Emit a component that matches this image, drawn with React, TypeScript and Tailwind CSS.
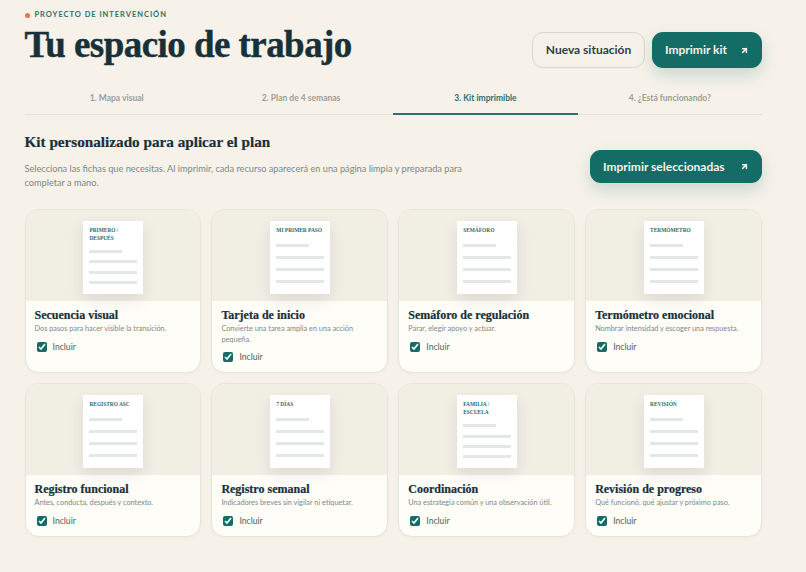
import { ArrowUpRight } from 'lucide-react';

const serif = { fontFamily: '"Liberation Serif", serif' };

const tabs = ['1. Mapa visual', '2. Plan de 4 semanas', '3. Kit imprimible', '4. ¿Está funcionando?'];

const cards = [
  { doc: ['PRIMERO /', 'DESPUÉS'], title: 'Secuencia visual', text: 'Dos pasos para hacer visible la transición.' },
  { doc: ['MI PRIMER PASO'], title: 'Tarjeta de inicio', text: 'Convierte una tarea amplia en una acción pequeña.' },
  { doc: ['SEMÁFORO'], title: 'Semáforo de regulación', text: 'Parar, elegir apoyo y actuar.' },
  { doc: ['TERMÓMETRO'], title: 'Termómetro emocional', text: 'Nombrar intensidad y escoger una respuesta.' },
  { doc: ['REGISTRO ASC'], title: 'Registro funcional', text: 'Antes, conducta, después y contexto.' },
  { doc: ['7 DÍAS'], title: 'Registro semanal', text: 'Indicadores breves sin vigilar ni etiquetar.' },
  { doc: ['FAMILIA /', 'ESCUELA'], title: 'Coordinación', text: 'Una estrategia común y una observación útil.' },
  { doc: ['REVISIÓN'], title: 'Revisión de progreso', text: 'Qué funcionó, qué ajustar y próximo paso.' },
];

function PrintButton({ label, className }: { label: string; className: string }) {
  return (
    <button className={`flex items-center justify-between rounded-[11px] bg-[#146c66] text-[12px] font-bold text-[#f7f3ea] shadow-[0_7px_16px_rgba(20,108,102,0.2)] ${className}`}>
      <span>{label}</span>
      <ArrowUpRight className="h-[9px] w-[9px]" strokeWidth={4} />
    </button>
  );
}

function KitCard({ doc, title, text }: { doc: string[]; title: string; text: string }) {
  const twoLines = doc.length > 1;
  return (
    <article className="overflow-hidden rounded-[14px] border border-[#e8e5dc] bg-[#fffdf8] shadow-[0_1px_3px_rgba(30,50,60,0.04)]">
      {/* Sheet preview */}
      <div className="flex h-[91px] justify-center bg-[#f1eee4] pt-[11px]">
        <div className="flex h-[73px] w-[60px] flex-col bg-white pl-[6.5px] pr-[5.5px] pt-[5px] shadow-[0_6px_14px_rgba(30,50,60,0.1)]">
          <div className="text-[5.4px] font-bold leading-[8px] text-[#2e6d6a]" style={serif}>
            {doc.map((line) => (
              <div key={line}>{line}</div>
            ))}
          </div>
          <div className={`flex flex-col ${twoLines ? 'mt-[8px] gap-[7.3px]' : 'mt-[10px] gap-[9px]'}`}>
            <div className="h-[3px] w-[33px] bg-[#e2e8e6]" />
            <div className="h-[3px] w-full bg-[#e2e8e6]" />
            <div className="h-[3px] w-full bg-[#e2e8e6]" />
            <div className="h-[3px] w-full bg-[#e2e8e6]" />
          </div>
        </div>
      </div>
      <div className="px-[9px] pb-[8.5px] pt-[7px]">
        <h3 className="text-[12px] font-bold leading-[15px] text-[#17303a] [-webkit-text-stroke:0.2px_#17303a]" style={serif}>{title}</h3>
        <p className="mt-[1px] text-[7.3px] leading-[10.5px] text-[#7d8887]">{text}</p>
        <label className="mt-[6px] flex items-center gap-[6px] pl-[2px] text-[8.6px] font-medium text-[#5f6b6b]">
          <input type="checkbox" defaultChecked className="m-0 h-[10px] w-[10px] accent-[#146c66]" />
          Incluir
        </label>
      </div>
    </article>
  );
}

export default function App() {
  return (
    <div className="min-h-[572px] bg-[#f6f2e9] pl-[24.5px] pr-[44px] pt-[10px] font-['Lato',sans-serif]">
      {/* Header */}
      <header className="flex items-start justify-between">
        <div>
          <div className="flex items-center gap-[5px] text-[7.5px] font-bold leading-[10px] tracking-[0.13em] text-[#2f6f69]">
            <span className="h-[5px] w-[5px] rounded-full bg-[#ee7059]" />
            PROYECTO DE INTERVENCIÓN
          </div>
          <h1 className="mt-[2px] text-[37px] font-bold leading-[46px] tracking-[-0.55px] text-[#17303a] [-webkit-text-stroke:0.4px_#17303a]" style={serif}>Tu espacio de trabajo</h1>
        </div>
        <div className="mt-[22px] flex gap-[7px]">
          <button className="h-[36px] w-[113px] rounded-[11px] border border-[#d9d8ce] text-[12px] font-bold text-[#2b3f46]">Nueva situación</button>
          <PrintButton label="Imprimir kit" className="h-[36px] w-[110px] px-[13px]" />
        </div>
      </header>

      {/* Tabs */}
      <nav className="mt-[12px] grid grid-cols-4 border-b border-[#e5e3da]">
        {tabs.map((tab, i) => (
          <div
            key={tab}
            className={`-mb-px flex h-[35px] items-center justify-center border-b-2 pt-[3px] text-[8.5px] font-bold ${
              i === 2 ? 'border-[#2f6f6d] text-[#2f6f69]' : 'border-transparent text-[#9a9d98]'
            }`}
          >
            {tab}
          </div>
        ))}
      </nav>

      {/* Section intro */}
      <section className="mt-[18px] flex items-start justify-between">
        <div className="w-[460px]">
          <h2 className="text-[15.2px] font-bold leading-[18px] text-[#17303a] [-webkit-text-stroke:0.2px_#17303a]" style={serif}>Kit personalizado para aplicar el plan</h2>
          <p className="mt-[11px] text-[9.2px] leading-[14px] text-[#7d8887]">
            Selecciona las fichas que necesitas. Al imprimir, cada recurso aparecerá en una página limpia y preparada para completar a mano.
          </p>
        </div>
        <PrintButton label="Imprimir seleccionadas" className="mt-[17px] h-[33px] w-[172px] px-[13px]" />
      </section>

      {/* Cards */}
      <div className="mt-[19px] grid grid-cols-4 gap-[10px]">
        {cards.map((card) => (
          <KitCard key={card.title} {...card} />
        ))}
      </div>
    </div>
  );
}
